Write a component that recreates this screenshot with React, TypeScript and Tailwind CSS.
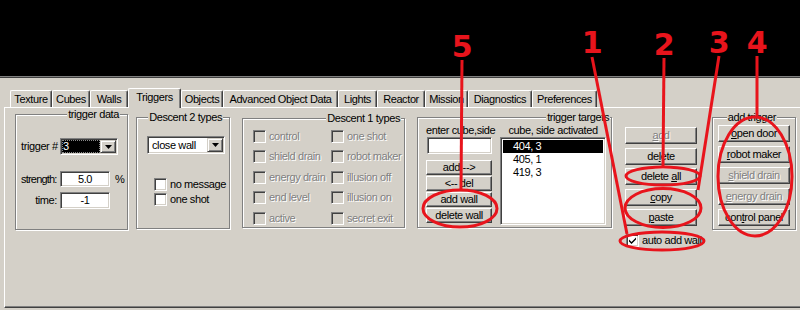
import React from "react";

const RED = "#e8141c";

const sunken =
  "border border-t-[#808080] border-l-[#808080] border-r-white border-b-white shadow-[inset_1px_1px_0_#404040,inset_-1px_-1px_0_#d4d0c8]";

function Btn({
  children,
  disabled = false,
  className = "",
}: {
  children: React.ReactNode;
  disabled?: boolean;
  className?: string;
}) {
  return (
    <div
      className={`flex items-center justify-center bg-[#d4d0c8] border border-t-white border-l-white border-r-[#404040] border-b-[#404040] shadow-[inset_-1px_-1px_0_#808080] leading-none whitespace-nowrap ${
        disabled ? "text-[#808080] [text-shadow:1px_1px_0_#ffffff]" : "text-black"
      } ${className}`}
    >
      <span className="whitespace-pre">{children}</span>
    </div>
  );
}

function ArrowBtn() {
  return (
    <div className="w-[16px] h-full flex items-center justify-center bg-[#d4d0c8] border border-t-[#d4d0c8] border-l-[#d4d0c8] border-r-[#404040] border-b-[#404040] shadow-[inset_1px_1px_0_#ffffff,inset_-1px_-1px_0_#808080]">
      <svg width="7" height="4" viewBox="0 0 7 4">
        <path d="M0 0h7L3.5 4z" fill="#000" />
      </svg>
    </div>
  );
}

function Check({ checked = false, disabled = false }: { checked?: boolean; disabled?: boolean }) {
  return (
    <div
      className={`w-[13px] h-[13px] shrink-0 flex items-center justify-center ${sunken} ${
        disabled ? "bg-[#d4d0c8]" : "bg-white"
      }`}
    >
      {checked && (
        <svg width="9" height="9" viewBox="0 0 9 9">
          <path d="M1 3.5 L3.5 6 L8 1.5 L8 3.5 L3.5 8 L1 5.5 Z" fill="#000" />
        </svg>
      )}
    </div>
  );
}

function CheckRow({
  label,
  checked = false,
  disabled = false,
  className = "",
}: {
  label: string;
  checked?: boolean;
  disabled?: boolean;
  className?: string;
}) {
  return (
    <div className={`flex items-center whitespace-nowrap ${className}`}>
      <Check checked={checked} disabled={disabled} />
      <span
        className={`ml-[3px] ${
          disabled ? "text-[#808080] [text-shadow:1px_1px_0_#ffffff]" : "text-black"
        }`}
      >
        {label}
      </span>
    </div>
  );
}

function Group({
  label,
  labelPos,
  className,
  children,
}: {
  label: string;
  labelPos: string;
  className: string;
  children?: React.ReactNode;
}) {
  return (
    <div
      className={`relative shrink-0 border border-[#808080] shadow-[1px_1px_0_#ffffff,inset_1px_1px_0_#ffffff] ${className}`}
    >
      <span className={`absolute top-[-7px] bg-[#d4d0c8] px-[1px] leading-[13px] whitespace-nowrap ${labelPos}`}>
        {label}
      </span>
      {children}
    </div>
  );
}

const tabs: [string, string, boolean][] = [
  ["Texture", "w-[42px]", false],
  ["Cubes", "w-[38px]", false],
  ["Walls", "w-[38px]", false],
  ["Triggers", "w-[53px]", true],
  ["Objects", "w-[42px]", false],
  ["Advanced Object Data", "w-[115px]", false],
  ["Lights", "w-[39px]", false],
  ["Reactor", "w-[48px]", false],
  ["Mission", "w-[43px]", false],
  ["Diagnostics", "w-[64px]", false],
  ["Preferences", "w-[65px]", false],
];

export default function App() {
  return (
    <div className="relative w-[800px] h-[310px] overflow-hidden bg-[#d4d0c8] text-black font-['Liberation_Sans',Arial,sans-serif] text-[11px] tracking-[-0.4px] leading-[13px]">
      <div className="h-[76px] bg-black" />
      <div className="h-[1px] bg-[#808080]" />
      <div className="h-[1px] bg-[#404040]" />

      <div className="pl-[4px] pt-[10px]">
        {/* tab strip */}
        <div className="flex items-end h-[19px] pl-[6px]">
          {tabs.map(([name, w, sel]) =>
            sel ? (
              <div
                key={name}
                className={`${w} relative z-10 h-[20px] -mb-[1px] pb-[3px] flex items-center justify-center bg-[#d4d0c8] border-t border-l border-white border-r border-r-[#404040] shadow-[inset_-1px_0_0_#808080] rounded-tl-[2px] rounded-tr-[2px] whitespace-nowrap`}
              >
                {name}
              </div>
            ) : (
              <div
                key={name}
                className={`${w} h-[17px] flex items-center justify-center border-t border-l border-white border-r border-r-[#404040] shadow-[inset_-1px_0_0_#808080] rounded-tl-[2px] rounded-tr-[2px] whitespace-nowrap`}
              >
                {name}
              </div>
            )
          )}
        </div>

        {/* panel */}
        <div className="w-[796px] h-[201px] border-t border-l border-white border-b border-b-[#404040] shadow-[inset_0_-1px_0_#808080] flex items-start">
          {/* trigger data */}
          <Group label="trigger data" labelPos="right-[7px]" className="ml-[10px] mt-[6px] w-[113px] h-[116px]">
            <div className="pt-[23px] pl-[5px]">
              <div className="flex items-center h-[17px]">
                <span className="w-[39px] whitespace-nowrap">trigger #</span>
                <div className={`flex w-[58px] h-[17px] bg-white p-[1px] ${sunken}`}>
                  <div className="flex-1 h-full bg-black text-white flex items-center pl-[1px] outline-1 outline-dotted outline-[#888] -outline-offset-1">
                    3
                  </div>
                  <ArrowBtn />
                </div>
              </div>
              <div className="flex items-center h-[16px] mt-[16px]">
                <span className="w-[39px] whitespace-nowrap tracking-[-0.8px]">strength:</span>
                <div className={`w-[50px] h-[16px] bg-white flex items-center justify-center ${sunken}`}>5.0</div>
                <span className="ml-[5px]">%</span>
              </div>
              <div className="flex items-center h-[17px] mt-[5px]">
                <span className="w-[39px] text-right pr-[3px]">time:</span>
                <div className={`w-[50px] h-[17px] bg-white flex items-center justify-center ${sunken}`}>-1</div>
              </div>
            </div>
          </Group>

          {/* Descent 2 types */}
          <Group label="Descent 2 types" labelPos="right-[6px]" className="ml-[8px] mt-[9px] w-[94px] h-[112px]">
            <div className="pt-[18px] pl-[10px]">
              <div className={`flex w-[78px] h-[18px] bg-white p-[1px] ${sunken}`}>
                <div className="flex-1 flex items-center pl-[3px] whitespace-nowrap">close wall</div>
                <ArrowBtn />
              </div>
              <div className="pl-[7px] mt-[23px] flex flex-col">
                <CheckRow label="no message" className="h-[15px]" />
                <CheckRow label="one shot" className="h-[15px]" />
              </div>
            </div>
          </Group>

          {/* Descent 1 types */}
          <Group label="Descent 1 types" labelPos="right-[3px]" className="ml-[12px] mt-[10px] w-[163px] h-[110px]">
            <div className="pt-[7px] pl-[10px] grid grid-cols-[78px_1fr] auto-rows-[20.5px] items-center">
              <CheckRow label="control" disabled />
              <CheckRow label="one shot" disabled />
              <CheckRow label="shield drain" disabled />
              <CheckRow label="robot maker" disabled />
              <CheckRow label="energy drain" disabled />
              <CheckRow label="illusion off" disabled />
              <CheckRow label="end level" disabled />
              <CheckRow label="illusion on" disabled />
              <CheckRow label="active" disabled />
              <CheckRow label="secret exit" disabled />
            </div>
          </Group>

          {/* trigger targets */}
          <Group label="trigger targets" labelPos="right-[1px]" className="ml-[12px] mt-[9px] w-[195px] h-[111px]">
            <div className="flex pl-[8px] pt-[6px]">
              <div className="w-[66px] flex flex-col">
                <div className="h-[13px] text-center whitespace-nowrap">enter cube,side</div>
                <div className={`ml-[1px] w-[65px] h-[17px] bg-white ${sunken}`} />
                <div className="mt-[6px] flex flex-col gap-[1px]">
                  <Btn className="h-[15px]">add --&gt;</Btn>
                  <Btn className="h-[15px]">&lt;-- del</Btn>
                  <Btn className="h-[15px]">add wall</Btn>
                  <Btn className="h-[15px]">delete wall</Btn>
                </div>
              </div>
              <div className="ml-[8px] w-[106px] flex flex-col">
                <div className="h-[13px] text-center whitespace-nowrap">cube, side activated</div>
                <div className={`h-[88px] bg-white p-[2px] ${sunken}`}>
                  <div className="h-[13px] bg-black text-white pl-[10px]">404, 3</div>
                  <div className="h-[13px] pl-[10px]">405, 1</div>
                  <div className="h-[13px] pl-[10px]">419, 3</div>
                </div>
              </div>
            </div>
          </Group>

          {/* buttons column */}
          <div className="ml-[13px] mt-[19px] w-[72px] shrink-0 flex flex-col">
            <div className="flex flex-col gap-[3.5px]">
              <Btn disabled className="h-[17px]">
                <u>a</u>dd
              </Btn>
              <Btn className="h-[17px]">
                de<u>l</u>ete
              </Btn>
              <Btn className="h-[17px]">
                {"delete "}
                <u>a</u>ll
              </Btn>
              <Btn className="h-[17px]">
                <u>c</u>opy
              </Btn>
              <Btn className="h-[17px]">
                <u>p</u>aste
              </Btn>
            </div>
            <CheckRow label="auto add wall" checked className="mt-[8px] ml-[1px] h-[13px]" />
          </div>

          {/* add trigger */}
          <Group label="add trigger" labelPos="right-[18px]" className="ml-[15px] mt-[9px] w-[84px] h-[113px]">
            <div className="pt-[7px] pl-[5px] flex flex-col gap-[4px]">
              <Btn className="w-[72px] h-[17px]">
                <u>o</u>pen door
              </Btn>
              <Btn className="w-[72px] h-[17px]">
                <u>r</u>obot maker
              </Btn>
              <Btn disabled className="w-[72px] h-[17px]">
                <u>s</u>hield drain
              </Btn>
              <Btn disabled className="w-[72px] h-[17px]">
                <u>e</u>nergy drain
              </Btn>
              <Btn className="w-[72px] h-[17px]">
                con<u>t</u>rol panel
              </Btn>
            </div>
          </Group>
        </div>
      </div>

      {/* red annotations */}
      <svg
        className="absolute left-0 top-0 pointer-events-none"
        width="800"
        height="310"
        viewBox="0 0 800 310"
      >
        <g
          fill={RED}
          style={{ fontFamily: "'DejaVu Sans', sans-serif", fontWeight: 700, fontSize: "30px" }}
          textAnchor="middle"
        >
          <text x="462" y="57">5</text>
          <text x="592" y="53">1</text>
          <text x="664" y="55">2</text>
          <text x="719" y="53">3</text>
          <text x="757" y="53">4</text>
        </g>
        <g stroke={RED} strokeWidth="3" fill="none">
          <line x1="462" y1="60" x2="461" y2="190" />
          <line x1="592" y1="57" x2="627" y2="234" />
          <line x1="664" y1="58" x2="663" y2="167" />
          <line x1="719" y1="56" x2="698" y2="190" />
          <line x1="757" y1="56" x2="757" y2="117" />
          <ellipse cx="460" cy="208.5" rx="37" ry="18.5" />
          <ellipse cx="663" cy="176" rx="37" ry="9" />
          <ellipse cx="663" cy="208" rx="38" ry="19.5" />
          <ellipse cx="662" cy="241" rx="42" ry="9" />
          <ellipse cx="755" cy="176.5" rx="37" ry="59.5" />
        </g>
      </svg>
    </div>
  );
}
